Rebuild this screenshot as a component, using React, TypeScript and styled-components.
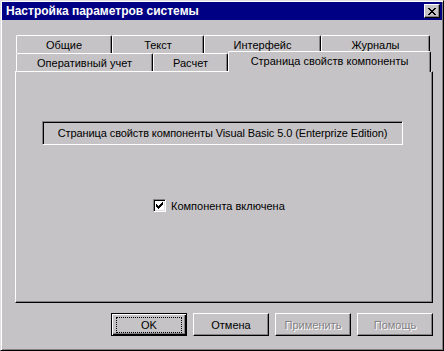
import React from 'react';
import styled, { createGlobalStyle } from 'styled-components';

const FACE = '#c6c3c6';
const SHADOW = '#848284';

const GlobalStyle = createGlobalStyle`
  html, body {
    margin: 0;
    padding: 0;
    background: ${FACE};
  }
  body {
    font-family: "Liberation Sans", Arial, sans-serif;
    font-size: 11px;
    color: #000;
  }
`;

const Window = styled.div`
  box-sizing: border-box;
  width: 444px;
  height: 351px;
  display: flex;
  flex-direction: column;
  background: ${FACE};
  border: 1px solid;
  border-color: #dfdfdf #000 #000 #dfdfdf;
  box-shadow: inset 1px 1px #fff, inset -1px -1px ${SHADOW};
  padding: 1px;
`;

const TitleBar = styled.div`
  height: 18px;
  flex: none;
  display: flex;
  align-items: center;
  justify-content: space-between;
  background: #000084;
  color: #fff;
  padding: 0 2px 0 4px;
`;

const TitleText = styled.span`
  font-weight: bold;
  font-size: 12px;
`;

const CloseButton = styled.div`
  box-sizing: border-box;
  width: 16px;
  height: 14px;
  display: flex;
  align-items: center;
  justify-content: center;
  background: ${FACE};
  border: 1px solid;
  border-color: #fff #000 #000 #fff;
  box-shadow: inset -1px -1px ${SHADOW};
`;

const Body = styled.div`
  flex: 1;
  display: flex;
  flex-direction: column;
  padding: 15px 9px 0 13px;
`;

const TabRows = styled.div`
  display: flex;
  flex-direction: column;
  padding-left: 1px;
`;

const TabRow = styled.div`
  display: flex;
  height: 18px;
`;

const Tab = styled.div<{ $width: number; $selected?: boolean }>`
  box-sizing: border-box;
  width: ${p => p.$width}px;
  flex: none;
  display: flex;
  align-items: center;
  justify-content: center;
  background: ${FACE};
  border-top: 1px solid #fff;
  border-left: 1px solid #fff;
  border-right: 1px solid #000;
  border-radius: 2px 2px 0 0;
  box-shadow: inset -1px 0 ${SHADOW};
  white-space: nowrap;
  position: relative;
  height: ${p => (p.$selected ? 21 : 18)}px;
  margin-top: ${p => (p.$selected ? -2 : 0)}px;
  padding-bottom: ${p => (p.$selected ? 2 : 0)}px;
  z-index: ${p => (p.$selected ? 2 : 1)};
`;

const Panel = styled.div`
  box-sizing: border-box;
  height: 232px;
  display: flex;
  flex-direction: column;
  background: ${FACE};
  border: 1px solid;
  border-color: #fff #000 #000 #fff;
  box-shadow: inset -1px -1px ${SHADOW};
  padding: 49px 29px 0 26px;
`;

const InfoField = styled.div`
  box-sizing: border-box;
  height: 24px;
  display: flex;
  align-items: center;
  justify-content: center;
  letter-spacing: -0.1px;
  border: 1px solid;
  border-color: ${SHADOW} #fff #fff ${SHADOW};
  box-shadow: inset 1px 1px #000;
`;

const CheckRow = styled.label`
  display: flex;
  align-items: center;
  gap: 5px;
  margin: 54px 0 0 111px;
`;

const CheckBox = styled.span`
  box-sizing: border-box;
  width: 13px;
  height: 13px;
  display: flex;
  align-items: center;
  justify-content: center;
  background: #fff;
  border: 1px solid;
  border-color: ${SHADOW} #fff #fff ${SHADOW};
  box-shadow: inset 1px 1px #000, inset -1px -1px #dfdfdf;
`;

const ButtonRow = styled.div`
  display: flex;
  justify-content: flex-end;
  gap: 6px;
  margin-top: 10px;
`;

const Button = styled.div<{ $default?: boolean; $disabled?: boolean }>`
  box-sizing: border-box;
  width: 76px;
  height: 23px;
  display: flex;
  align-items: center;
  justify-content: center;
  background: ${FACE};
  border: 1px solid;
  border-color: ${p => (p.$default ? '#000' : '#fff #000 #000 #fff')};
  box-shadow: ${p =>
    p.$default
      ? `inset 1px 1px #fff, inset -1px -1px #000, inset -2px -2px ${SHADOW}`
      : `inset -1px -1px ${SHADOW}`};
  color: ${p => (p.$disabled ? SHADOW : '#000')};
  text-shadow: ${p => (p.$disabled ? '1px 1px #fff' : 'none')};
`;

const FocusRing = styled.span`
  box-sizing: border-box;
  width: 66px;
  height: 16px;
  display: flex;
  align-items: center;
  justify-content: center;
  border: 1px dotted #000;
`;

const CloseIcon = () => (
  <svg width="8" height="7" viewBox="0 0 8 7" shapeRendering="crispEdges">
    <path
      fill="#000"
      d="M0 0h2v1h-2zM6 0h2v1h-2zM1 1h2v1h-2zM5 1h2v1h-2zM2 2h4v1h-4zM3 3h2v1h-2zM2 4h4v1h-4zM1 5h2v1h-2zM5 5h2v1h-2zM0 6h2v1h-2zM6 6h2v1h-2z"
    />
  </svg>
);

const CheckIcon = () => (
  <svg width="7" height="7" viewBox="0 0 7 7" shapeRendering="crispEdges">
    <path
      fill="#000"
      d="M6 0h1v3h-1zM5 1h1v3h-1zM4 2h1v3h-1zM3 3h1v3h-1zM2 4h1v3h-1zM1 3h1v3h-1zM0 2h1v3h-1z"
    />
  </svg>
);

const topTabs = [
  { label: 'Общие', width: 96 },
  { label: 'Текст', width: 92 },
  { label: 'Интерфейс', width: 117 },
  { label: 'Журналы', width: 109 },
];

const bottomTabs = [
  { label: 'Оперативный учет', width: 137 },
  { label: 'Расчет', width: 75 },
  { label: 'Страница свойств компоненты', width: 203, selected: true },
];

const buttons = [
  { label: 'OK', isDefault: true },
  { label: 'Отмена' },
  { label: 'Применить', disabled: true },
  { label: 'Помощь', disabled: true },
];

export default function App() {
  return (
    <>
      <GlobalStyle />
      <Window>
        <TitleBar>
          <TitleText>Настройка параметров системы</TitleText>
          <CloseButton>
            <CloseIcon />
          </CloseButton>
        </TitleBar>
        <Body>
          <TabRows>
            <TabRow>
              {topTabs.map(t => (
                <Tab key={t.label} $width={t.width}>
                  {t.label}
                </Tab>
              ))}
            </TabRow>
            <TabRow>
              {bottomTabs.map(t => (
                <Tab key={t.label} $width={t.width} $selected={t.selected}>
                  {t.label}
                </Tab>
              ))}
            </TabRow>
          </TabRows>
          <Panel>
            <InfoField>
              Страница свойств компоненты Visual Basic 5.0 (Enterprize Edition)
            </InfoField>
            <CheckRow>
              <CheckBox>
                <CheckIcon />
              </CheckBox>
              Компонента включена
            </CheckRow>
          </Panel>
          <ButtonRow>
            {buttons.map(b => (
              <Button key={b.label} $default={b.isDefault} $disabled={b.disabled}>
                {b.isDefault ? <FocusRing>{b.label}</FocusRing> : b.label}
              </Button>
            ))}
          </ButtonRow>
        </Body>
      </Window>
    </>
  );
}
